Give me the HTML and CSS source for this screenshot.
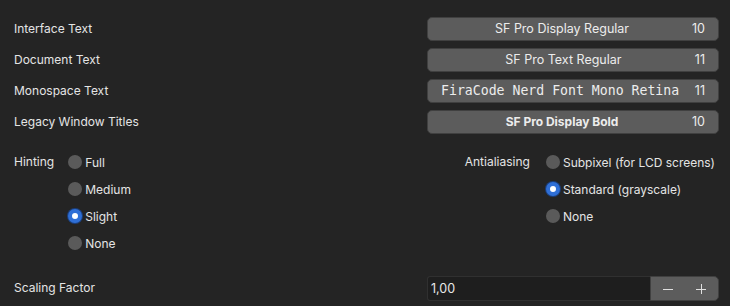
FILE: index.html
```html
<!DOCTYPE html>
<html lang="en">

<head>
    <meta charset="UTF-8">
    <meta name="viewport" content="width=device-width, initial-scale=1.0">
    <title>Fonts</title>
    <link rel="stylesheet" href="styles.css">
</head>

<body>
    <!-- font choosers -->
    <div class="fonts">
        <div class="row">
            <span class="label">Interface Text</span>
            <button class="font-btn"><span class="name">SF Pro Display Regular</span><span class="size">10</span></button>
        </div>
        <div class="row">
            <span class="label">Document Text</span>
            <button class="font-btn"><span class="name">SF Pro Text Regular</span><span class="size">11</span></button>
        </div>
        <div class="row">
            <span class="label">Monospace Text</span>
            <button class="font-btn"><span class="name mono">FiraCode Nerd Font Mono Retina</span><span class="size">11</span></button>
        </div>
        <div class="row">
            <span class="label">Legacy Window Titles</span>
            <button class="font-btn"><span class="name bold">SF Pro Display Bold</span><span class="size">10</span></button>
        </div>
    </div>

    <!-- hinting / antialiasing -->
    <div class="options">
        <div class="group">
            <span class="label">Hinting</span>
            <div class="radios">
                <label class="radio"><span class="dot"></span>Full</label>
                <label class="radio"><span class="dot"></span>Medium</label>
                <label class="radio"><span class="dot on"></span>Slight</label>
                <label class="radio"><span class="dot"></span>None</label>
            </div>
        </div>
        <div class="group right">
            <span class="label">Antialiasing</span>
            <div class="radios">
                <label class="radio"><span class="dot"></span>Subpixel (for LCD screens)</label>
                <label class="radio"><span class="dot on"></span>Standard (grayscale)</label>
                <label class="radio"><span class="dot"></span>None</label>
            </div>
        </div>
    </div>

    <!-- scaling -->
    <div class="row scaling">
        <span class="label">Scaling Factor</span>
        <div class="spin">
            <input class="spin-input" type="text" value="1,00">
            <div class="spin-btns">
                <button class="step" aria-label="minus">
                    <svg width="12" height="12" viewBox="0 0 12 12"><path d="M1 6.5h10" stroke="#e0e0e0" stroke-width="1"/></svg>
                </button>
                <button class="step" aria-label="plus">
                    <svg width="12" height="12" viewBox="0 0 12 12"><path d="M1 6.5h10M6.5 1v10" stroke="#e0e0e0" stroke-width="1"/></svg>
                </button>
            </div>
        </div>
    </div>
</body>

</html>
```

FILE: styles.css
```css
/* page */
body {
    margin: 0;
    padding: 17px 14px 0 14px;
    background-color: #242424;
    color: #e4e4e4;
    font-family: Inter, "Noto Sans", sans-serif;
    font-size: 12px;
    height: 306px;
    box-sizing: border-box;
    overflow: hidden;
}

.fonts {
    display: flex;
    flex-direction: column;
    gap: 7px;
    margin-right: -3px;
}

.row {
    display: flex;
    align-items: center;
    justify-content: space-between;
    height: 24px;
}

.row .label {
    margin-top: -2px;
}

/* font buttons */
.font-btn {
    width: 292px;
    height: 24px;
    box-sizing: border-box;
    display: flex;
    align-items: center;
    padding: 0 13px 0 12px;
    background-color: #5c5c5c;
    border: 1px solid #404040;
    border-radius: 5px;
    color: #ececec;
    font-family: Inter, "Noto Sans", sans-serif;
    font-size: 12.5px;
    cursor: pointer;
}

.font-btn .name {
    flex: 1;
    text-align: center;
    margin-top: -1px;
}

.font-btn .mono {
    font-family: "DejaVu Sans Mono", monospace;
    font-size: 13.2px;
    text-align: left;
    padding-left: 1px;
}

.font-btn .bold {
    font-weight: 700;
    font-size: 12px;
}

.font-btn .size {
    margin-left: 8px;
    margin-top: -1px;
}

/* radio groups */
.options {
    display: flex;
    justify-content: space-between;
    margin-top: 18px;
}

.group {
    display: flex;
    align-items: flex-start;
    gap: 14px;
}

.group.right {
    gap: 16px;
    margin-right: 1px;
}

.group .label {
    line-height: 20px;
}

.radios {
    display: flex;
    flex-direction: column;
    gap: 7px;
}

.radio {
    display: flex;
    align-items: center;
    gap: 3px;
    height: 20px;
}

.dot {
    width: 14px;
    height: 14px;
    border-radius: 50%;
    background-color: #5a5a5a;
    box-sizing: border-box;
}

.dot.on {
    background-color: #fff;
    border: 4px solid #2f6fd6;
    box-shadow: 0 0 0 1px #1b3f7c;
}

/* scaling factor */
.scaling {
    margin-top: 23px;
    height: 25px;
    margin-right: -3px;
}

.spin {
    display: flex;
    width: 292px;
    height: 25px;
}

.spin-input {
    flex: 1;
    min-width: 0;
    box-sizing: border-box;
    background-color: #1e1e1e;
    border: 1px solid #303030;
    border-right: none;
    border-radius: 3px 0 0 3px;
    color: #e8e8e8;
    font-family: Inter, "Noto Sans", sans-serif;
    font-size: 12.5px;
    padding: 0 3px;
    outline: none;
}

.spin-btns {
    display: flex;
    width: 69px;
    background-color: #5c5c5c;
    border: 1px solid #404040;
    border-radius: 0 5px 5px 0;
    box-sizing: border-box;
}

.step {
    flex: 1;
    display: flex;
    align-items: center;
    justify-content: center;
    background: none;
    border: none;
    padding: 0;
    cursor: pointer;
}
```
